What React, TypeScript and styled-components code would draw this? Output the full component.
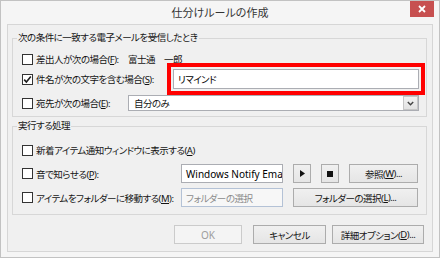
import styled, { createGlobalStyle } from "styled-components";

const GlobalStyle = createGlobalStyle`
  html, body {
    margin: 0;
    padding: 0;
    background: #ffffff;
  }
  body {
    font-family: "Noto Sans", "Noto Sans CJK JP", sans-serif;
    font-size: 9.5px;
    letter-spacing: -0.5px;
    color: #141414;
    font-feature-settings: "palt";
  }
  * {
    box-sizing: border-box;
  }
`;

const SWindow = styled.div`
  width: 440px;
  height: 258px;
  border: 1px solid #c2c2c2;
  background: #f5f5f5;
  padding: 0 6px 5px 6px;
  display: flex;
  flex-direction: column;
`;

const STitleBar = styled.div`
  height: 23px;
  display: grid;
  grid-template-columns: 1fr auto 1fr;
  align-items: start;
`;

const STitle = styled.div`
  grid-column: 2;
  font-size: 11px;
  letter-spacing: 0;
  line-height: 24px;
  color: #333333;
`;

const SClose = styled.div`
  grid-column: 3;
  justify-self: end;
  width: 24px;
  height: 16px;
  margin-right: -1px;
  background: #c75050;
  display: flex;
  align-items: center;
  justify-content: center;
`;

const SClient = styled.div`
  flex: 1;
  border: 1px solid #d6d6d6;
  background: #f0f0f0;
  padding: 0 5px 0 4px;
  display: flex;
  flex-direction: column;
`;

const SGroup = styled.div<{ $top: number }>`
  margin-top: ${({ $top }) => $top}px;
  border: 1px solid #d7d7d7;
  padding: 0 7px 0 9px;
  display: flex;
  flex-direction: column;
`;

const SGroupTitle = styled.span<{ $after: number }>`
  align-self: flex-start;
  margin: -8px 0 ${({ $after }) => $after}px -5px;
  padding: 0 1px;
  line-height: 14px;
  background: #f0f0f0;
`;

const SRow = styled.div<{ $h: number; $gap?: number }>`
  height: ${({ $h }) => $h}px;
  margin-top: ${({ $gap }) => $gap ?? 0}px;
  display: flex;
  align-items: center;
`;

const SLabelCell = styled.div<{ $w?: number }>`
  display: flex;
  align-items: center;
  gap: 3px;
  white-space: nowrap;
  ${({ $w }) => ($w ? `width: ${$w}px; flex: none;` : "")}
`;

const SBox = styled.span`
  width: 11px;
  height: 11px;
  flex: none;
  border: 1px solid #333333;
  background: #ffffff;
  display: flex;
  align-items: center;
  justify-content: center;
`;

const STextBox = styled.div<{ $highlight?: boolean; $disabled?: boolean; $h?: number }>`
  height: ${({ $h }) => $h ?? 20}px;
  border: 1px solid ${({ $disabled }) => ($disabled ? "#b4c2d6" : "#abadb3")};
  background: ${({ $disabled }) => ($disabled ? "#f7f7f7" : "#ffffff")};
  color: ${({ $disabled }) => ($disabled ? "#8c8c8c" : "#000000")};
  padding: 0 4px;
  display: flex;
  align-items: center;
  white-space: nowrap;
  overflow: hidden;
  min-width: 0;
  ${({ $highlight }) =>
    $highlight ? "outline: 4px solid #ff0000; outline-offset: 2px;" : ""}
`;

const SLatin = styled.span`
  font-size: 10px;
  letter-spacing: 0;
`;

const SFill = styled.div`
  flex: 1;
  min-width: 0;
`;

const SCombo = styled.div`
  flex: 1;
  height: 16px;
  border: 1px solid #abadb3;
  background: #ffffff;
  display: flex;
  align-items: center;
  padding-left: 5px;
`;

const SComboArrow = styled.span`
  margin-left: auto;
  width: 15px;
  height: 14px;
  border: 1px solid #c6c6c6;
  background: linear-gradient(#f2f2f2, #e2e2e2);
  display: flex;
  align-items: center;
  justify-content: center;
`;

const SActionGrid = styled.div<{ $gap: number }>`
  margin-top: ${({ $gap }) => $gap}px;
  display: grid;
  grid-template-columns: 149px 102px 18px 18px 69px;
  column-gap: 10px;
  height: 19px;
  align-items: center;
`;

const SButton = styled.button<{ $w?: number; $span?: number; $disabled?: boolean }>`
  height: 19px;
  ${({ $w }) => ($w ? `width: ${$w}px;` : "")}
  ${({ $span }) => ($span ? `grid-column: span ${$span};` : "")}
  border: 1px solid ${({ $disabled }) => ($disabled ? "#cbcbcb" : "#acacac")};
  background: ${({ $disabled }) =>
    $disabled ? "#f4f4f4" : "linear-gradient(#f0f0f0, #e5e5e5)"};
  color: ${({ $disabled }) => ($disabled ? "#9d9d9d" : "#141414")};
  font: inherit;
  letter-spacing: inherit;
  font-feature-settings: inherit;
  padding: 0;
  display: flex;
  align-items: center;
  justify-content: center;
  white-space: nowrap;
`;

const SFooterRow = styled.div`
  margin-top: 10px;
  padding-right: 3px;
  display: flex;
  justify-content: flex-end;
  gap: 6px;
`;

const SOkSlot = styled.div`
  margin-right: 5px;
  display: flex;
`;

const Check = ({ checked }: { checked?: boolean }) => (
  <SBox>
    {checked && (
      <svg width="9" height="9" viewBox="0 0 9 9">
        <path d="M1.2 4.6 L3.4 7 L7.8 1.6" fill="none" stroke="#1e1e1e" strokeWidth="1.6" />
      </svg>
    )}
  </SBox>
);

const Chevron = () => (
  <svg width="7" height="5" viewBox="0 0 7 5">
    <path d="M0.8 1 L3.5 3.8 L6.2 1" fill="none" stroke="#444" strokeWidth="1.4" />
  </svg>
);

const App = () => {
  return (
    <>
      <GlobalStyle />
      <SWindow>
        <STitleBar>
          <STitle>仕分けルールの作成</STitle>
          <SClose>
            <svg width="8" height="8" viewBox="0 0 8 8">
              <path d="M1 1 L7 7 M7 1 L1 7" stroke="#ffffff" strokeWidth="1.8" />
            </svg>
          </SClose>
        </STitleBar>
        <SClient>
          <SGroup $top={13}>
            <SGroupTitle $after={6}>次の条件に一致する電子メールを受信したとき</SGroupTitle>
            <SRow $h={16}>
              <SLabelCell $w={106}>
                <Check />
                <span>
                  差出人が次の場合(<u>F</u>):
                </span>
              </SLabelCell>
              <span>富士通　一郎</span>
            </SRow>
            <SRow $h={20} $gap={2}>
              <SLabelCell $w={151}>
                <Check checked />
                <span>
                  件名が次の文字を含む場合(<u>S</u>):
                </span>
              </SLabelCell>
              <SFill>
                <STextBox $highlight>リマインド</STextBox>
              </SFill>
            </SRow>
            <SRow $h={16} $gap={6}>
              <SLabelCell $w={106}>
                <Check />
                <span>
                  宛先が次の場合(<u>E</u>):
                </span>
              </SLabelCell>
              <SCombo>
                自分のみ
                <SComboArrow>
                  <Chevron />
                </SComboArrow>
              </SCombo>
            </SRow>
            <SRow $h={5} />
          </SGroup>

          <SGroup $top={9}>
            <SGroupTitle $after={9}>実行する処理</SGroupTitle>
            <SRow $h={16}>
              <SLabelCell>
                <Check />
                <span>
                  新着アイテム通知ウィンドウに表示する(<u>A</u>)
                </span>
              </SLabelCell>
            </SRow>
            <SActionGrid $gap={6}>
              <SLabelCell>
                <Check />
                <span>
                  音で知らせる(<u>P</u>):
                </span>
              </SLabelCell>
              <STextBox $h={19}>
                <SLatin>Windows Notify Email.wav</SLatin>
              </STextBox>
              <SButton>
                <svg width="5" height="7" viewBox="0 0 5 7">
                  <path d="M0 0 L5 3.5 L0 7 Z" fill="#111" />
                </svg>
              </SButton>
              <SButton>
                <svg width="6" height="6" viewBox="0 0 6 6">
                  <rect width="6" height="6" fill="#111" />
                </svg>
              </SButton>
              <SButton>
                参照(<u>W</u>)...
              </SButton>
            </SActionGrid>
            <SActionGrid $gap={5}>
              <SLabelCell>
                <Check />
                <span>
                  アイテムをフォルダーに移動する(<u>M</u>):
                </span>
              </SLabelCell>
              <STextBox $h={19} $disabled>
                フォルダーの選択
              </STextBox>
              <SButton $span={3}>
                フォルダーの選択(<u>L</u>)...
              </SButton>
            </SActionGrid>
            <SRow $h={7} />
          </SGroup>

          <SFooterRow>
            <SOkSlot>
              <SButton $w={68} $disabled>
                <SLatin>OK</SLatin>
              </SButton>
            </SOkSlot>
            <SButton $w={73}>キャンセル</SButton>
            <SButton $w={92}>
              詳細オプション(<u>D</u>)...
            </SButton>
          </SFooterRow>
        </SClient>
      </SWindow>
    </>
  );
};

export default App;
